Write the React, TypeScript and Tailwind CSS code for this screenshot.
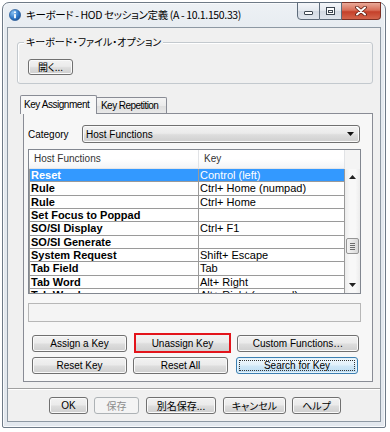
import type { ReactNode } from 'react'

const UI = "font-['Liberation_Sans','Noto_Sans_CJK_JP',sans-serif]"
const JP = "font-['Noto_Sans_CJK_JP',sans-serif] [font-feature-settings:'palt']"
const BTN =
  'flex items-center justify-center rounded-[3px] border border-[#707070] bg-[linear-gradient(to_bottom,#f2f2f2_0%,#ebebeb_45%,#dddddd_55%,#cfcfcf_100%)] shadow-[inset_0_0_0_1px_#fafafa] text-black'

const rows: [string, string][] = [
  ['Reset', 'Control (left)'],
  ['Rule', 'Ctrl+ Home (numpad)'],
  ['Rule', 'Ctrl+ Home'],
  ['Set Focus to Poppad', ''],
  ['SO/SI Display', 'Ctrl+ F1'],
  ['SO/SI Generate', ''],
  ['System Request', 'Shift+ Escape'],
  ['Tab Field', 'Tab'],
  ['Tab Word', 'Alt+ Right'],
  ['Tab Word', 'Alt+ Right (numpad)'],
]

function Btn({ className = '', children }: { className?: string; children: ReactNode }) {
  return <div className={`${BTN} ${className}`}>{children}</div>
}

function TitleBar() {
  return (
    <div className="h-[24px] flex items-start shrink-0">
      <svg className="ml-[6px] mt-[6px]" width="12" height="12" viewBox="0 0 12 12">
        <defs>
          <radialGradient id="ic" cx="0.35" cy="0.3" r="0.8">
            <stop offset="0" stopColor="#8cc2f2" />
            <stop offset="0.6" stopColor="#2f78c8" />
            <stop offset="1" stopColor="#1a4f94" />
          </radialGradient>
        </defs>
        <circle cx="6" cy="6" r="5.6" fill="url(#ic)" stroke="#1d4f8c" strokeWidth="0.6" />
        <circle cx="6" cy="3.3" r="1" fill="#fff" />
        <rect x="5.1" y="5" width="1.8" height="4.3" rx="0.4" fill="#fff" />
      </svg>
      <span className="ml-[5px] mt-[4px] text-[10.5px] leading-[15px] tracking-[-0.35px] font-['Noto_Sans_CJK_JP',sans-serif] [font-feature-settings:'palt'] text-black whitespace-nowrap">
        キーボード - HOD セッション定義 (A - 10.1.150.33)
      </span>
      <div className="ml-auto mr-[4px] -mt-[1px] flex h-[18px]">
        <div className="w-[23px] h-full flex items-end justify-center pb-[4px] border border-[#5e6c7b] rounded-bl-[4px] bg-[linear-gradient(to_bottom,#f4f6f9,#e3e8ee_50%,#d3dae3_51%,#dfe5ec)]">
          <div className="w-[9px] h-[4px] rounded-[1px] border border-[#3c4650] bg-white" />
        </div>
        <div className="w-[22px] h-full flex items-center justify-center border-y border-r border-[#5e6c7b] bg-[linear-gradient(to_bottom,#f4f6f9,#e3e8ee_50%,#d3dae3_51%,#dfe5ec)]">
          <div className="w-[9px] h-[8px] border border-[#3c4650] bg-white flex items-center justify-center">
            <div className="w-[5px] h-[3px] border border-[#3c4650]" />
          </div>
        </div>
        <div className="w-[39px] h-full flex items-center justify-center border-y border-r border-[#7d3024] rounded-br-[4px] bg-[linear-gradient(to_bottom,#e9a998,#d86e58_45%,#c4402a_55%,#d4654c)]">
          <svg width="12" height="10" viewBox="0 0 12 10">
            <path d="M2 1.5 L10 8.5 M10 1.5 L2 8.5" stroke="#5a1d12" strokeWidth="3.6" strokeLinecap="round" />
            <path d="M2 1.5 L10 8.5 M10 1.5 L2 8.5" stroke="#fff" strokeWidth="2" strokeLinecap="round" />
          </svg>
        </div>
      </div>
    </div>
  )
}

function ScrollBar() {
  return (
    <div className="w-[15px] h-full flex flex-col bg-[linear-gradient(to_right,#ececec,#f8f8f8_30%,#f8f8f8_70%,#ececec)]">
      <div className="h-[16px] flex items-center justify-center">
        <svg width="7" height="4" viewBox="0 0 7 4"><path d="M0 4 L3.5 0 L7 4 Z" fill="#222" /></svg>
      </div>
      <div className="mt-[53px] mx-[1px] h-[16px] rounded-[2px] border border-[#959595] bg-[linear-gradient(to_right,#f3f3f3,#e8e8e8_50%,#d8d8d8)] flex flex-col items-center justify-center gap-[1px]">
        <div className="w-[5px] h-[1px] bg-[#6d6d6d]" />
        <div className="w-[5px] h-[1px] bg-[#6d6d6d]" />
        <div className="w-[5px] h-[1px] bg-[#6d6d6d]" />
        <div className="w-[5px] h-[1px] bg-[#6d6d6d]" />
      </div>
      <div className="flex-1" />
      <div className="h-[16px] flex items-center justify-center">
        <svg width="7" height="4" viewBox="0 0 7 4"><path d="M0 0 L7 0 L3.5 4 Z" fill="#222" /></svg>
      </div>
    </div>
  )
}

function KeyTable() {
  return (
    <div className="ml-[4px] mt-[6px] w-[333px] h-[145px] border border-[#828790] bg-white flex flex-col">
      <div className="h-[19px] flex shrink-0">
        <div className="w-[316px] flex bg-[linear-gradient(to_bottom,#ffffff,#ffffff_50%,#f3f4f6)] border-b border-[#e3e5e8] text-[10px] text-[#333] leading-[18px]">
          <div className="w-[170px] pl-[5px] border-r border-[#e1e3e6]">Host Functions</div>
          <div className="w-[146px] pl-[5px] border-r border-[#e1e3e6]">Key</div>
        </div>
        <div className="flex-1 bg-[#f4f4f4]" />
      </div>
      <div className="flex h-[124px]">
        <div className="w-[316px] overflow-hidden">
          {rows.map(([fn, key], i) => (
            <div
              key={i}
              className={`h-[13.33px] flex border-b border-[#9a9a9a] text-[11px] leading-[12px] ${i === 0 ? 'bg-[#3399ff] text-white' : 'text-black'}`}
            >
              <div className="w-[170px] pl-[1px] border-x border-[#9a9a9a] font-bold whitespace-nowrap overflow-hidden">{fn}</div>
              <div className="w-[146px] pl-[1px] border-r border-[#9a9a9a] whitespace-nowrap overflow-hidden">{key}</div>
            </div>
          ))}
        </div>
        <ScrollBar />
      </div>
    </div>
  )
}

export default function App() {
  return (
    <div className={`w-[390px] h-[432px] bg-white pt-[2px] pl-[2px] overflow-hidden ${UI}`}>
      <div className="w-[384px] h-[426px] flex flex-col rounded-t-[7px] rounded-b-[2px] border border-[#6e7a87] bg-[linear-gradient(to_bottom,#edf1f5,#e6ebf0_30px,#e3e8ee)] shadow-[inset_0_0_0_1px_#f8fafc]">
        <TitleBar />
        <div className="mx-[4px] mb-[5px] flex-1 border border-[#8d98a3] bg-[#f0f0f0] flex flex-col">
          {/* file options group */}
          <div className="relative ml-[9px] mt-[14px] w-[356px] h-[42px] shrink-0 rounded-[3px] border border-[#c3c9ce] shadow-[inset_1px_1px_0_#ffffff]">
            <span className={`absolute left-[6px] -top-[8px] px-[2px] bg-[#f0f0f0] text-[10px] leading-[14px] text-black ${JP}`}>
              キーボード・ファイル・オプション
            </span>
            <Btn className={`ml-[10px] mt-[16px] w-[45px] h-[16px] text-[10px] leading-[14px] ${JP}`}>開く...</Btn>
          </div>

          {/* tabs */}
          <div className="ml-[12px] mt-[11px] shrink-0">
            <div className="h-[18px] flex items-end">
              <div className="relative z-10 -mb-[1px] w-[77px] h-[19px] border border-b-0 border-[#898c95] rounded-t-[2px] bg-[#f7f7f7] pl-[3px] text-[10px] leading-[17px] tracking-[-0.45px] text-black whitespace-nowrap">
                Key Assignment
              </div>
              <div className="w-[70px] h-[16px] border border-l-0 border-b-0 border-[#898c95] rounded-tr-[2px] bg-[linear-gradient(to_bottom,#f4f4f4,#ebebeb_50%,#dedede_51%,#e8e8e8)] pl-[4px] text-[10px] leading-[15px] tracking-[-0.55px] text-black whitespace-nowrap">
                Key Repetition
              </div>
            </div>
            <div className="ml-[3px] w-[350px] h-[269px] border border-[#898c95] bg-[#f7f7f7] flex flex-col">
              <div className="ml-[4px] mt-[11px] h-[18px] flex items-center shrink-0">
                <div className="w-[54px] text-[10px] text-black">Category</div>
                <div className={`${BTN} w-[278px] h-[18px] !justify-between pl-[3px] pr-[5px] text-[10px]`}>
                  <span>Host Functions</span>
                  <svg width="7" height="4" viewBox="0 0 7 4"><path d="M0 0 L7 0 L3.5 4 Z" fill="#111" /></svg>
                </div>
              </div>
              <KeyTable />
              <div className="ml-[4px] mt-[9px] w-[333px] h-[19px] shrink-0 border border-[#b7b7b7] bg-[#f4f4f4]" />
              <div className="mt-[11px] h-[20px] flex items-center shrink-0 text-[10px]">
                <Btn className="ml-[8px] w-[95px] h-[17px]">Assign a Key</Btn>
                <div className="ml-[7px] w-[97px] h-[20px] border-2 border-[#e3141b] bg-[linear-gradient(to_bottom,#f2f2f2_0%,#ebebeb_45%,#dddddd_55%,#cfcfcf_100%)] flex items-center justify-center text-black">
                  Unassign Key
                </div>
                <Btn className="ml-[6px] w-[122px] h-[17px]">Custom Functions…</Btn>
              </div>
              <div className="mt-[4px] h-[17px] flex items-center shrink-0 text-[10px]">
                <Btn className="ml-[8px] w-[95px] h-[17px]">Reset Key</Btn>
                <Btn className="ml-[6px] w-[95px] h-[17px]">Reset All</Btn>
                <div className="relative ml-[8px] w-[122px] h-[17px] rounded-[3px] border border-[#3c7fb1] bg-[linear-gradient(to_bottom,#f0f8fd_0%,#e2f1fb_45%,#cfe7f7_55%,#bcdcf2_100%)] shadow-[inset_0_0_0_1px_#e6f4fc] flex items-center justify-center text-black">
                  <div className="absolute inset-[2px] border border-dotted border-[#333]" />
                  Search for Key
                </div>
              </div>
            </div>
          </div>

          {/* separator */}
          <div className="mt-[6px] h-[2px] shrink-0 border-t border-[#a0a0a0] border-b border-b-white" />

          {/* dialog buttons */}
          <div className={`mt-[7px] h-[17px] flex shrink-0 text-[10px] leading-[14px] ${JP}`}>
            <Btn className={`ml-[41px] w-[39px] h-[17px] ${UI}`}>OK</Btn>
            <div className="ml-[6px] w-[45px] h-[17px] rounded-[3px] border border-[#adb2b5] bg-[#f4f4f4] flex items-center justify-center text-[#8d8d8d]">保存</div>
            <Btn className="ml-[7px] w-[70px] h-[17px]">別名保存...</Btn>
            <Btn className="ml-[7px] w-[63px] h-[17px]">キャンセル</Btn>
            <Btn className="ml-[6px] w-[49px] h-[17px]">ヘルプ</Btn>
          </div>
        </div>
      </div>
    </div>
  )
}
